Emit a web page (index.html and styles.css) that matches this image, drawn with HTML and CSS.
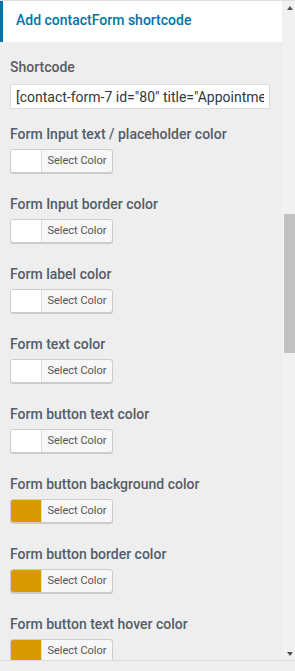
FILE: index.html
```html
<!DOCTYPE html>
<html lang="en">
<head>
  <meta charset="UTF-8" />
  <meta name="viewport" content="width=device-width, initial-scale=1.0"/>
  <title>Customize: Add contactForm shortcode</title>
  <link rel="stylesheet" href="styles.css">
</head>
<body>
  <div class="customizer">
    <div class="panel">
      <h3 class="section-title">Add contactForm shortcode</h3>

      <div class="controls">
        <div class="control">
          <label class="control-label">Shortcode</label>
          <input class="shortcode-input" type="text" value='[contact-form-7 id="80" title="Appointment form"]'>
        </div>

        <div class="control">
          <label class="control-label">Form Input text / placeholder color</label>
          <button class="color-btn"><span class="swatch"></span><span class="color-text">Select Color</span></button>
        </div>

        <div class="control">
          <label class="control-label">Form Input border color</label>
          <button class="color-btn"><span class="swatch"></span><span class="color-text">Select Color</span></button>
        </div>

        <div class="control">
          <label class="control-label">Form label color</label>
          <button class="color-btn"><span class="swatch"></span><span class="color-text">Select Color</span></button>
        </div>

        <div class="control">
          <label class="control-label">Form text color</label>
          <button class="color-btn"><span class="swatch"></span><span class="color-text">Select Color</span></button>
        </div>

        <div class="control">
          <label class="control-label">Form button text color</label>
          <button class="color-btn"><span class="swatch"></span><span class="color-text">Select Color</span></button>
        </div>

        <div class="control">
          <label class="control-label">Form button background color</label>
          <button class="color-btn"><span class="swatch swatch-gold"></span><span class="color-text">Select Color</span></button>
        </div>

        <div class="control">
          <label class="control-label">Form button border color</label>
          <button class="color-btn"><span class="swatch swatch-gold"></span><span class="color-text">Select Color</span></button>
        </div>

        <div class="control">
          <label class="control-label">Form button text hover color</label>
          <button class="color-btn"><span class="swatch swatch-gold"></span><span class="color-text">Select Color</span></button>
        </div>
      </div>
    </div>

    <div class="scrollbar">
      <span class="arrow arrow-up"></span>
      <div class="track">
        <div class="thumb"></div>
      </div>
      <span class="arrow arrow-down"></span>
    </div>
  </div>
  <div class="footer"></div>
</body>
</html>
```

FILE: styles.css
```css
body {
  margin: 0;
  padding: 0;
  background: #eee;
  font-family: Roboto, "Liberation Sans", sans-serif;
}
.customizer {
  display: flex;
  height: 661px;
  overflow: hidden;
  border-top: 1px solid #ddd;
  border-bottom: 1px solid #ddd;
  box-sizing: border-box;
}
.panel {
  width: 282px;
  flex-shrink: 0;
  overflow: hidden;
}
.section-title {
  margin: 0;
  height: 41px;
  box-sizing: border-box;
  padding: 0 0 0 13px;
  background: #fff;
  border-left: 3px solid #0073aa;
  color: #0073aa;
  font-size: 14px;
  font-weight: 500;
  line-height: 39px;
}
.controls {
  padding: 15px 12px 0 10px;
}
.control {
  display: flex;
  flex-direction: column;
  align-items: flex-start;
  margin-bottom: 21px;
}
.control-label {
  color: #555d66;
  font-size: 14px;
  font-weight: 500;
  line-height: 20px;
  margin-bottom: 5px;
}
.shortcode-input {
  width: 260px;
  height: 25px;
  box-sizing: border-box;
  margin: 2px 0 -6px;
  padding: 0 5px;
  border: 1px solid #ddd;
  background: #fff;
  color: #32373c;
  font-family: inherit;
  font-size: 14px;
  outline: none;
}
.color-btn {
  display: flex;
  align-items: stretch;
  width: 103px;
  height: 24px;
  padding: 0;
  border: 1px solid #ccc;
  border-radius: 3px;
  background: #f7f7f7;
  box-shadow: 0 1px 0 #ccc;
  overflow: hidden;
  font-family: inherit;
  cursor: pointer;
}
.swatch {
  width: 30px;
  background: #fff;
  border-right: 1px solid #ddd;
}
.swatch-gold {
  background: #d99a00;
}
.color-text {
  flex: 1;
  color: #555;
  font-size: 11px;
  line-height: 22px;
  text-align: center;
}
.scrollbar {
  width: 13px;
  display: flex;
  flex-direction: column;
  align-items: center;
  background: #f1f1f1;
}
.arrow {
  width: 0;
  height: 0;
  border-left: 3.5px solid transparent;
  border-right: 3.5px solid transparent;
  margin-left: 2px;
}
.arrow-up {
  margin-top: 5px;
  border-bottom: 4px solid #505050;
}
.arrow-down {
  margin-bottom: 4px;
  border-top: 4px solid #505050;
}
.track {
  flex: 1;
  width: 100%;
  padding-top: 204px;
  box-sizing: border-box;
  display: flex;
  justify-content: flex-end;
}
.thumb {
  width: 11px;
  height: 139px;
  background: #c1c1c1;
}
.footer {
  height: 10px;
  background: #eee;
}
```
